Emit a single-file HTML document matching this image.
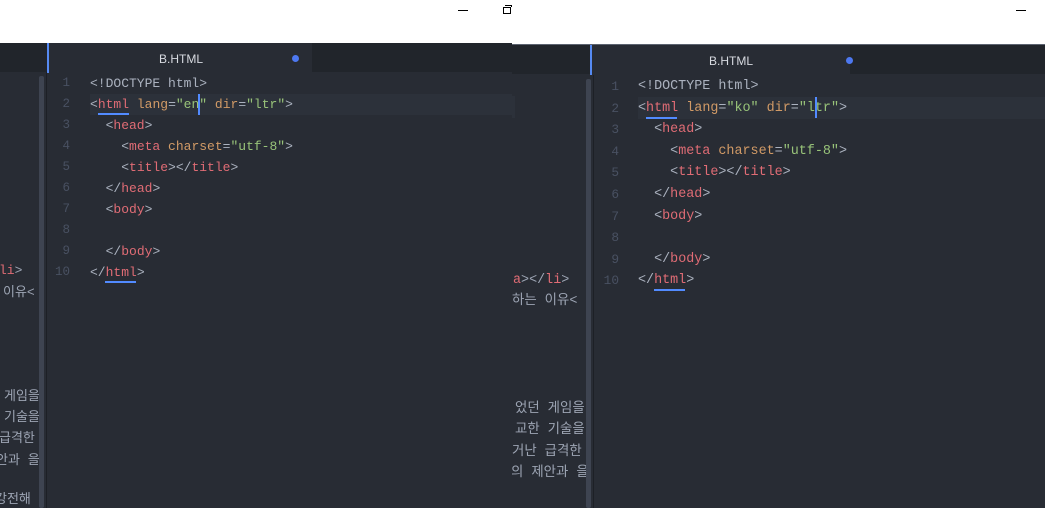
<!DOCTYPE html>
<html><head><meta charset="utf-8"><style>
*{margin:0;padding:0;box-sizing:border-box}
body{width:1045px;height:508px;overflow:hidden;background:#fff;position:relative;font-family:"Liberation Mono",monospace}
.a{position:absolute}
.pane{position:absolute;overflow:hidden;background:#282c34}
.code{position:absolute;white-space:pre;color:#abb2bf}
.ln{position:absolute;white-space:pre;color:#495162;text-align:right}
.t{color:#e06c75}.at{color:#d19a66}.s{color:#98c379}
.clip{position:absolute;overflow:hidden}
.sl{position:absolute;white-space:pre;color:#9da5b4;font-family:"Liberation Mono","Noto Sans CJK KR",monospace;font-size:13px;line-height:18px}
.tab{font-family:"Liberation Sans",sans-serif;color:#d7dae0;font-size:12px;position:absolute}
</style></head><body>
<div class="a" style="left:458px;top:10px;width:10px;height:1px;background:#000"></div>
<div class="a" style="left:503px;top:7px;width:8px;height:7px;border:1px solid #000"></div>
<div class="a" style="left:505px;top:5px;width:7px;height:2px;border-top:1px solid #000;border-right:1px solid #000"></div>
<div class="a" style="left:1016px;top:10px;width:10px;height:1px;background:#000"></div>

<!-- LEFT PANE -->
<div class="pane" style="left:0;top:43px;width:512px;height:465px">
  <div class="a" style="left:0;top:0;width:512px;height:29px;background:#21252b"></div>
  <div class="a" style="left:47px;top:0;width:265px;height:30px;background:#282c34;border-left:2px solid #568af2"></div>
  <div class="tab" style="left:159px;top:9px">B.HTML</div>
  <div class="a" style="left:292px;top:12px;width:7px;height:7px;border-radius:50%;background:#4d78f0"></div>
  <div class="clip" style="left:0;top:30px;width:39px;height:435px">
    <div class="sl" style="left:-1px;top:189px"><span class="t">li</span>&gt;</div>
    <div class="sl" style="left:3px;top:211px">이유&lt;</div>
    <div class="sl" style="left:4px;top:315px">게임을</div>
    <div class="sl" style="left:4px;top:336px">기술을</div>
    <div class="sl" style="left:-1px;top:357px">급격한</div>
    <div class="sl" style="left:-4px;top:379px">안과 을</div>
    <div class="sl" style="left:-5px;top:418px">강전해</div>
  </div>
  <div class="a" style="left:39px;top:33px;width:5px;height:432px;background:#3e4451;border-radius:2px"></div>
  <div class="a" style="left:46px;top:29px;width:1px;height:436px;background:#1d2026"></div>
  <div class="a" style="left:90px;top:51px;width:422px;height:21px;background:#2c313a"></div>
  <div class="ln" style="left:52px;width:18px;top:30px;font-size:12.5px;line-height:21px">1
2
3
4
5
6
7
8
9
10</div>
  <div class="code" style="left:90px;top:30px;font-size:13px;line-height:21px">&lt;!DOCTYPE html&gt;
&lt;<span class="t">html</span> <span class="at">lang</span>=<span class="s">"en"</span> <span class="at">dir</span>=<span class="s">"ltr"</span>&gt;
  &lt;<span class="t">head</span>&gt;
    &lt;<span class="t">meta</span> <span class="at">charset</span>=<span class="s">"utf-8"</span>&gt;
    &lt;<span class="t">title</span>&gt;&lt;/<span class="t">title</span>&gt;
  &lt;/<span class="t">head</span>&gt;
  &lt;<span class="t">body</span>&gt;

  &lt;/<span class="t">body</span>&gt;
&lt;/<span class="t">html</span>&gt;</div>
  <div class="a" style="left:98px;top:70px;width:31px;height:2px;background:#528bff"></div>
  <div class="a" style="left:105px;top:238px;width:31px;height:2px;background:#528bff"></div>
  <div class="a" style="left:198px;top:51px;width:2px;height:21px;background:#528bff"></div>
</div>

<!-- RIGHT PANE -->
<div class="pane" style="left:512px;top:44px;width:533px;height:464px">
  <div class="a" style="left:0;top:0;width:533px;height:30px;background:#21252b"></div>
  <div class="a" style="left:0;top:0;width:533px;height:1px;background:#5c6370"></div>
  <div class="a" style="left:78px;top:1px;width:260px;height:30px;background:#282c34;border-left:2px solid #568af2"></div>
  <div class="tab" style="left:197px;top:10px">B.HTML</div>
  <div class="a" style="left:334px;top:13px;width:7px;height:7px;border-radius:50%;background:#4d78f0"></div>
  <div class="clip" style="left:0;top:31px;width:74px;height:433px">
    <div class="sl" style="left:1px;top:197px;font-size:13.4px"><span class="t">a</span>&gt;&lt;/<span class="t">li</span>&gt;</div>
    <div class="sl" style="left:0px;top:218px;font-size:13.4px">하는 이유&lt;</div>
    <div class="sl" style="left:3px;top:326px;font-size:13.4px">었던 게임을</div>
    <div class="sl" style="left:3px;top:347px;font-size:13.4px">교한 기술을</div>
    <div class="sl" style="left:0px;top:369px;font-size:13.4px">거난 급격한</div>
    <div class="sl" style="left:-1px;top:390px;font-size:13.4px">의 제안과 을</div>
  </div>
  <div class="a" style="left:74px;top:35px;width:5px;height:429px;background:#3e4451;border-radius:2px"></div>
  <div class="a" style="left:81px;top:31px;width:1px;height:433px;background:#1d2026"></div>
  <div class="a" style="left:0;top:52px;width:3px;height:22px;background:#2c313a"></div>
  <div class="a" style="left:126px;top:53px;width:407px;height:22px;background:#2c313a"></div>
  <div class="ln" style="left:88px;width:19px;top:32px;font-size:12.8px;line-height:21.6px">1
2
3
4
5
6
7
8
9
10</div>
  <div class="code" style="left:126px;top:32px;font-size:13.4px;line-height:21.6px">&lt;!DOCTYPE html&gt;
&lt;<span class="t">html</span> <span class="at">lang</span>=<span class="s">"ko"</span> <span class="at">dir</span>=<span class="s">"ltr"</span>&gt;
  &lt;<span class="t">head</span>&gt;
    &lt;<span class="t">meta</span> <span class="at">charset</span>=<span class="s">"utf-8"</span>&gt;
    &lt;<span class="t">title</span>&gt;&lt;/<span class="t">title</span>&gt;
  &lt;/<span class="t">head</span>&gt;
  &lt;<span class="t">body</span>&gt;

  &lt;/<span class="t">body</span>&gt;
&lt;/<span class="t">html</span>&gt;</div>
  <div class="a" style="left:134px;top:73px;width:31px;height:2px;background:#528bff"></div>
  <div class="a" style="left:142px;top:245px;width:31px;height:2px;background:#528bff"></div>
  <div class="a" style="left:303px;top:53px;width:2px;height:21px;background:#528bff"></div>
</div>
</body></html>
